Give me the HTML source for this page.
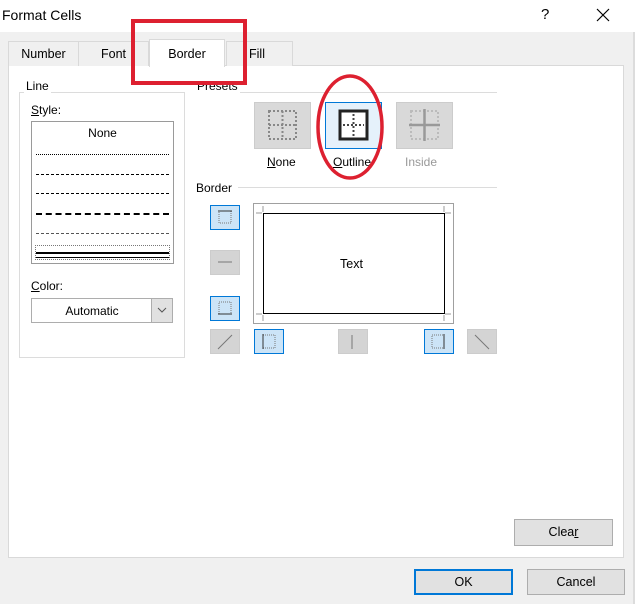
<!DOCTYPE html>
<html><head><style>
*{box-sizing:border-box;margin:0;padding:0}
body{width:635px;height:604px;background:#f0f0f0;font-family:"Liberation Sans",sans-serif;font-size:12px;color:#000;position:relative;overflow:hidden}
.a{position:absolute}
.title{left:0;top:0;width:635px;height:32px;background:#fff}
.tab{border:1px solid #d9d9d9;border-bottom:none;background:#f0f0f0;text-align:center;line-height:24px;font-size:12.5px}
.panel{left:8px;top:65px;width:616px;height:493px;background:#fff;border:1px solid #d9d9d9}
.grp{border:1px solid #dcdcdc}
.lbl{background:#fff;padding:0 2px;font-size:12px}
.pb{width:57px;height:47px;background:#d9d9d9;border:1px solid #ccc}
.sb{width:30px;height:25px;background:#d4d4d4;border:1px solid #ccc}
.sel{background:#cce4f7;border:1px solid #0078d7}
.btn{background:#e1e1e1;border:1px solid #adadad;text-align:center;font-size:12.5px}
.ln{left:4px;right:4px;height:0}
</style></head><body>
<div class="a title"></div>
<div class="a" style="left:2px;top:7px;font-size:14px">Format Cells</div>
<div class="a" style="left:541px;top:6px;font-size:15px">?</div>
<svg class="a" style="left:596px;top:8px" width="14" height="14"><path d="M1 1L13 13M13 1L1 13" stroke="#000" stroke-width="1.2"/></svg>
<div class="a" style="left:633px;top:32px;width:2px;height:572px;background:#dcdcdc"></div>

<div class="a panel"></div>
<div class="a tab" style="left:8px;top:41px;width:71px;height:25px">Number</div>
<div class="a tab" style="left:78px;top:41px;width:71px;height:25px">Font</div>
<div class="a tab" style="left:226px;top:41px;width:67px;height:25px;text-align:left;padding-left:22px">Fill</div>
<div class="a tab" style="left:149px;top:39px;width:76px;height:28px;background:#fff;line-height:28px">Border</div>

<!-- Line group -->
<div class="a grp" style="left:19px;top:92px;width:166px;height:266px"></div>
<div class="a lbl" style="left:24px;top:79px">Line</div>
<div class="a" style="left:31px;top:103px"><u>S</u>tyle:</div>
<div class="a" style="left:31px;top:121px;width:143px;height:143px;border:1px solid #9a9a9a;background:#fff">
 <div class="a" style="left:0;right:0;top:4px;text-align:center">None</div>
 <div class="a ln" style="top:32px;border-top:1px dotted #000"></div>
 <div class="a ln" style="top:52px;border-top:1px dashed #000"></div>
 <div class="a ln" style="top:71px;border-top:1px dashed #000"></div>
 <div class="a ln" style="top:91px;border-top:2px dashed #000"></div>
 <div class="a ln" style="top:111px;border-top:1px dashed #555"></div>
 <div class="a" style="left:3px;right:3px;top:123px;height:15px;border:1px dotted #777"></div>
 <div class="a ln" style="top:130px;border-top:2px solid #000"></div>
 <div class="a ln" style="top:135px;border-top:1px solid #000"></div>
</div>
<div class="a" style="left:31px;top:279px"><u>C</u>olor:</div>
<div class="a" style="left:31px;top:298px;width:142px;height:25px;border:1px solid #adadad;background:#fff">
 <div class="a" style="left:0;width:120px;top:5px;text-align:center">Automatic</div>
 <div class="a" style="right:0;top:0;width:21px;height:23px;background:#e1e1e1;border-left:1px solid #adadad"></div>
 <svg class="a" style="right:5px;top:8px" width="10" height="7"><path d="M1 1L5 5L9 1" stroke="#555" fill="none"/></svg>
</div>

<!-- Presets -->
<div class="a" style="left:238px;top:92px;width:259px;border-top:1px solid #dcdcdc"></div>
<div class="a lbl" style="left:195px;top:79px">Presets</div>
<div class="a pb" style="left:254px;top:102px"><svg width="55" height="45"><g fill="none" stroke="#888" stroke-width="2" stroke-dasharray="2 2"><rect x="14" y="8" width="27" height="28"/><path d="M14 22H41M27.5 8V36"/></g></svg></div>
<div class="a pb sel" style="left:325px;top:102px;background:#e5f1fb"><svg width="55" height="45"><rect x="14" y="8" width="27" height="28" fill="#fff" stroke="#222" stroke-width="3"/><path d="M17 22H38M27.5 11V33" stroke="#444" stroke-width="2" stroke-dasharray="2 2"/></svg></div>
<div class="a pb" style="left:396px;top:102px"><svg width="55" height="45"><rect x="14" y="8" width="27" height="28" fill="none" stroke="#bbb" stroke-width="2" stroke-dasharray="2 2"/><path d="M12 22H43M27.5 6V38" stroke="#999" stroke-width="2.5"/></svg></div>
<div class="a" style="left:267px;top:155px"><u>N</u>one</div>
<div class="a" style="left:333px;top:155px"><u>O</u>utline</div>
<div class="a" style="left:405px;top:155px;color:#999">Inside</div>

<!-- Border -->
<div class="a" style="left:238px;top:187px;width:259px;border-top:1px solid #dcdcdc"></div>
<div class="a lbl" style="left:194px;top:181px">Border</div>
<div class="a sb sel" style="left:210px;top:205px"></div>
<div class="a sb" style="left:210px;top:250px"></div>
<div class="a sb sel" style="left:210px;top:296px"></div>
<div class="a sb" style="left:210px;top:329px"></div>
<div class="a sb sel" style="left:254px;top:329px"></div>
<div class="a sb" style="left:338px;top:329px"></div>
<div class="a sb sel" style="left:424px;top:329px"></div>
<div class="a sb" style="left:467px;top:329px"></div>
<svg class="a" style="left:210px;top:205px" width="300" height="150"><g stroke="#777" fill="none" stroke-width="1">
<rect x="9" y="6" width="12" height="12" stroke-dasharray="1 1"/><path d="M8 6H22" stroke="#333"/>
<path d="M8 57H22"/>
<rect x="9" y="97" width="12" height="12" stroke-dasharray="1 1"/><path d="M8 109H22" stroke="#333"/>
<path d="M8 144L22 130"/>
<rect x="53" y="130" width="12" height="13" stroke-dasharray="1 1"/><path d="M53 129V144" stroke="#333"/>
<path d="M142 130V144"/>
<rect x="222" y="130" width="12" height="13" stroke-dasharray="1 1"/><path d="M234 129V144" stroke="#333"/>
<path d="M265 130L279 144"/>
</g></svg>
<div class="a" style="left:253px;top:203px;width:201px;height:121px;border:1px solid #a0a0a0;background:#fff"></div>
<svg class="a" style="left:253px;top:203px" width="201" height="121"><g stroke="#999"><path d="M10 3V9M3 10H9M191 3V9M192 10H198M10 112V118M3 111H9M191 112V118M192 111H198"/></g></svg>
<div class="a" style="left:263px;top:213px;width:182px;height:101px;border:1.5px solid #000"></div>
<div class="a" style="left:340px;top:257px;font-size:12.5px">Text</div>

<div class="a btn" style="left:514px;top:519px;width:99px;height:27px;line-height:25px">Clea<u>r</u></div>
<div class="a btn" style="left:414px;top:569px;width:99px;height:26px;line-height:22px;border:2px solid #0078d7">OK</div>
<div class="a btn" style="left:527px;top:569px;width:98px;height:26px;line-height:24px">Cancel</div>

<!-- red annotations -->
<div class="a" style="left:131px;top:19px;width:116px;height:66px;border:4px solid #dd2030"></div>
<svg class="a" style="left:314px;top:72px" width="74" height="110"><ellipse cx="36" cy="55" rx="32" ry="51" fill="none" stroke="#dd2030" stroke-width="3.5"/></svg>
</body></html>
